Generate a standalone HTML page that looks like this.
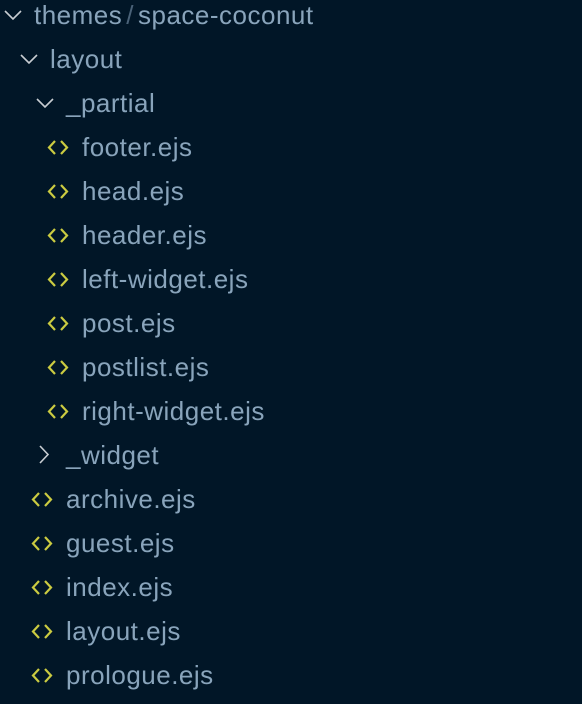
<!DOCTYPE html>
<html><head><style>
html,body{margin:0;padding:0;background:#011627;width:582px;height:704px;overflow:hidden}
.r{position:absolute;height:44px;line-height:44px;font-family:"Liberation Sans",sans-serif;font-size:26px;letter-spacing:0.5px;color:#89a4bb;white-space:nowrap}
svg{position:absolute}
</style></head><body>
<svg style="left:4px;top:9px" width="18" height="12"><path d="M1 2 L9 10 L17 2" fill="none" stroke="#c8cdd2" stroke-width="1.6"/></svg>
<div class="r" style="left:34px;top:-7px">themes<span style="color:#4a6278;margin:0 4px">/</span>space-coconut</div>
<svg style="left:20px;top:53px" width="18" height="12"><path d="M1 2 L9 10 L17 2" fill="none" stroke="#c8cdd2" stroke-width="1.6"/></svg>
<div class="r" style="left:50px;top:37px">layout</div>
<svg style="left:36px;top:97px" width="18" height="12"><path d="M1 2 L9 10 L17 2" fill="none" stroke="#c8cdd2" stroke-width="1.6"/></svg>
<div class="r" style="left:66px;top:81px">_partial</div>

<svg style="left:47px;top:140px" width="22" height="15"><path d="M8 1 L2 7.5 L8 14 M14 1 L20 7.5 L14 14" fill="none" stroke="#cbcb41" stroke-width="2.2"/></svg>
<div class="r" style="left:82px;top:125px">footer.ejs</div>
<svg style="left:47px;top:184px" width="22" height="15"><path d="M8 1 L2 7.5 L8 14 M14 1 L20 7.5 L14 14" fill="none" stroke="#cbcb41" stroke-width="2.2"/></svg>
<div class="r" style="left:82px;top:169px">head.ejs</div>
<svg style="left:47px;top:228px" width="22" height="15"><path d="M8 1 L2 7.5 L8 14 M14 1 L20 7.5 L14 14" fill="none" stroke="#cbcb41" stroke-width="2.2"/></svg>
<div class="r" style="left:82px;top:213px">header.ejs</div>
<svg style="left:47px;top:272px" width="22" height="15"><path d="M8 1 L2 7.5 L8 14 M14 1 L20 7.5 L14 14" fill="none" stroke="#cbcb41" stroke-width="2.2"/></svg>
<div class="r" style="left:82px;top:257px">left-widget.ejs</div>
<svg style="left:47px;top:316px" width="22" height="15"><path d="M8 1 L2 7.5 L8 14 M14 1 L20 7.5 L14 14" fill="none" stroke="#cbcb41" stroke-width="2.2"/></svg>
<div class="r" style="left:82px;top:301px">post.ejs</div>
<svg style="left:47px;top:360px" width="22" height="15"><path d="M8 1 L2 7.5 L8 14 M14 1 L20 7.5 L14 14" fill="none" stroke="#cbcb41" stroke-width="2.2"/></svg>
<div class="r" style="left:82px;top:345px">postlist.ejs</div>
<svg style="left:47px;top:404px" width="22" height="15"><path d="M8 1 L2 7.5 L8 14 M14 1 L20 7.5 L14 14" fill="none" stroke="#cbcb41" stroke-width="2.2"/></svg>
<div class="r" style="left:82px;top:389px">right-widget.ejs</div>

<svg style="left:38px;top:445px" width="12" height="20"><path d="M2 1 L10 9.5 L2 18" fill="none" stroke="#c8cdd2" stroke-width="1.6"/></svg>
<div class="r" style="left:66px;top:433px">_widget</div>

<svg style="left:31px;top:492px" width="22" height="15"><path d="M8 1 L2 7.5 L8 14 M14 1 L20 7.5 L14 14" fill="none" stroke="#cbcb41" stroke-width="2.2"/></svg>
<div class="r" style="left:66px;top:477px">archive.ejs</div>
<svg style="left:31px;top:536px" width="22" height="15"><path d="M8 1 L2 7.5 L8 14 M14 1 L20 7.5 L14 14" fill="none" stroke="#cbcb41" stroke-width="2.2"/></svg>
<div class="r" style="left:66px;top:521px">guest.ejs</div>
<svg style="left:31px;top:580px" width="22" height="15"><path d="M8 1 L2 7.5 L8 14 M14 1 L20 7.5 L14 14" fill="none" stroke="#cbcb41" stroke-width="2.2"/></svg>
<div class="r" style="left:66px;top:565px">index.ejs</div>
<svg style="left:31px;top:624px" width="22" height="15"><path d="M8 1 L2 7.5 L8 14 M14 1 L20 7.5 L14 14" fill="none" stroke="#cbcb41" stroke-width="2.2"/></svg>
<div class="r" style="left:66px;top:609px">layout.ejs</div>
<svg style="left:31px;top:668px" width="22" height="15"><path d="M8 1 L2 7.5 L8 14 M14 1 L20 7.5 L14 14" fill="none" stroke="#cbcb41" stroke-width="2.2"/></svg>
<div class="r" style="left:66px;top:653px">prologue.ejs</div>
</body></html>
